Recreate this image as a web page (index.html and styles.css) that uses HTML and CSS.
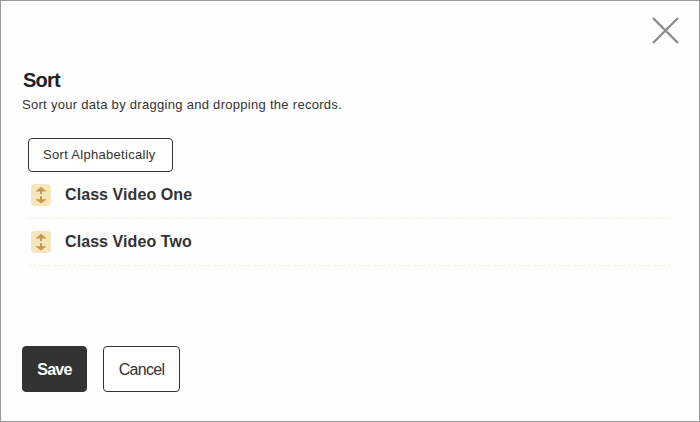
FILE: index.html
```html
<!DOCTYPE html>
<html lang="en">
<head>
  <meta charset="UTF-8" />
  <meta name="viewport" content="width=device-width, initial-scale=1" />
  <title>Sort</title>
  <link rel="stylesheet" href="styles.css">
</head>
<body>
  <div class="modal">
    <div class="modal-top">
      <button class="btn-close" aria-label="Close">
        <svg width="28" height="28" viewBox="0 0 28 28">
          <path d="M2 2L27 27M27 2L2 27" fill="none" stroke="#8c8c8c" stroke-width="2.4" />
        </svg>
      </button>
    </div>

    <h1>Sort</h1>
    <p class="intro">Sort your data by dragging and dropping the records.</p>

    <div class="sort-area">
      <button class="btn btn-sort">Sort Alphabetically</button>
      <ul class="sort-list">
        <li>
          <svg class="handle" width="20" height="22" viewBox="0 0 20 22">
            <rect width="20" height="22" rx="4" fill="#f5e6bd" />
            <path d="M10 2.7L15.7 7.5H11V10H9V7.5H4.3ZM10 19.5L4.3 15.2H9V12.3H11V15.2H15.7Z" fill="#c69a4a" />
          </svg>
          <span class="name">Class Video One</span>
        </li>
        <li>
          <svg class="handle" width="20" height="22" viewBox="0 0 20 22">
            <rect width="20" height="22" rx="4" fill="#f5e6bd" />
            <path d="M10 2.7L15.7 7.5H11V10H9V7.5H4.3ZM10 19.5L4.3 15.2H9V12.3H11V15.2H15.7Z" fill="#c69a4a" />
          </svg>
          <span class="name">Class Video Two</span>
        </li>
      </ul>
    </div>

    <div class="actions">
      <button class="btn btn-save">Save</button>
      <button class="btn btn-cancel">Cancel</button>
    </div>
  </div>
</body>
</html>
```
FILE: styles.css
```css
* {
  box-sizing: border-box;
}
body {
  margin: 0;
  font-family: "Liberation Sans", Arial, sans-serif;
  background: #fff;
  color: #333;
}
.modal {
  height: 422px;
  padding: 0 20px 0 21px;
  border: 1px solid #999;
  background: #fefefe;
}
.modal-top {
  display: flex;
  justify-content: flex-end;
  height: 67px;
  padding-top: 15px;
}
.btn-close {
  width: 28px;
  height: 28px;
  padding: 0;
  border: none;
  background: none;
  cursor: pointer;
}
.btn-close svg {
  display: block;
}
h1 {
  margin: 0 0 0 1px;
  font-size: 20px;
  line-height: 24px;
  font-weight: 600;
  letter-spacing: -0.8px;
  color: #222;
}
.intro {
  margin: 5px 0 0;
  font-size: 13px;
  line-height: 16px;
  letter-spacing: 0.29px;
}
.sort-area {
  padding: 25px 8px 0 6px;
}
.btn {
  border: 1px solid #333;
  border-radius: 4px;
  background: #fff;
  color: #333;
  font-family: inherit;
  white-space: nowrap;
  cursor: pointer;
}
.btn-sort {
  display: block;
  width: 145px;
  height: 34px;
  padding: 0 0 2px 14px;
  text-align: left;
  font-size: 13px;
  letter-spacing: 0.3px;
}
.sort-list {
  margin: 0;
  padding: 0;
  list-style: none;
}
.sort-list li {
  display: flex;
  align-items: center;
  gap: 14px;
  height: 47px;
  padding-left: 3px;
  border-bottom: 1px dashed #f3f3d6;
}
.name {
  font-size: 16px;
  font-weight: bold;
  letter-spacing: 0.08px;
}
.actions {
  display: flex;
  gap: 16px;
  margin-top: 80px;
}
.btn-save, .btn-cancel {
  height: 46px;
  padding: 2px 0 0;
  font-size: 16px;
  letter-spacing: -0.7px;
}
.btn-save {
  width: 65px;
  background: #333;
  color: #fff;
  font-weight: bold;
}
.btn-cancel {
  width: 77px;
}
```
